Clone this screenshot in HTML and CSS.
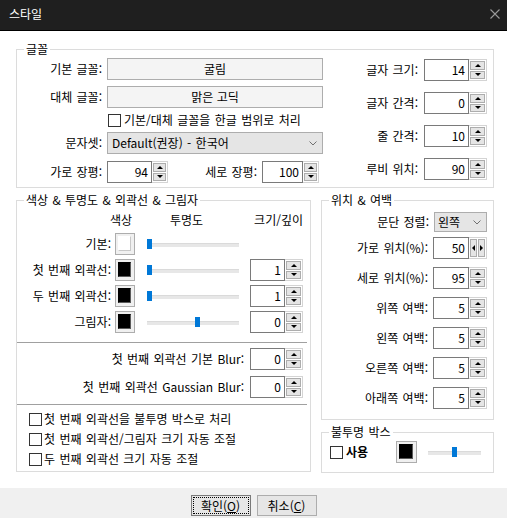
FILE: index.html
```html
<!DOCTYPE html>
<html lang="ko">
<head>
<meta charset="utf-8">
<title>스타일</title>
<link rel="stylesheet" href="styles.css">
</head>
<body>
<div class="titlebar">
  <span class="title">스타일</span>
  <svg class="close" width="10" height="10" viewBox="0 0 10 10"><path d="M0.5 0.5L9.5 9.5M9.5 0.5L0.5 9.5" stroke="#9a9a9a" stroke-width="1.1" fill="none"/></svg>
</div>
<main class="content">
  <fieldset class="group g-font">
    <legend>글꼴</legend>
    <div class="font-body">
      <div class="font-left">
        <div class="row"><span class="lbl l85">기본 글꼴:</span><button class="btn font-btn">굴림</button></div>
        <div class="row mt6"><span class="lbl l85">대체 글꼴:</span><button class="btn font-btn">맑은 고딕</button></div>
        <label class="check-row cr-font"><span class="cb"></span>기본/대체 글꼴을 한글 범위로 처리</label>
        <div class="row mt2"><span class="lbl l85">문자셋:</span><div class="combo font-combo"><span>Default(권장) - 한국어</span><svg class="chev" width="8" height="5" viewBox="0 0 8 5"><path d="M0.5 0.5L4 4L7.5 0.5" stroke="#707070" fill="none"/></svg></div></div>
        <div class="row mt7">
          <span class="lbl l85">가로 장평:</span>
          <div class="spin"><span class="val v45">94</span><span class="arrows a16"><i class="up"></i><i class="down"></i></span></div>
          <span class="lbl l89">세로 장평:</span>
          <div class="spin"><span class="val v41">100</span><span class="arrows a16"><i class="up"></i><i class="down"></i></span></div>
        </div>
      </div>
      <div class="font-right">
        <div class="row rrow first"><span class="lbl">글자 크기:</span><div class="spin"><span class="val v45">14</span><span class="arrows"><i class="up"></i><i class="down"></i></span></div></div>
        <div class="row rrow"><span class="lbl">글자 간격:</span><div class="spin"><span class="val v45">0</span><span class="arrows"><i class="up"></i><i class="down"></i></span></div></div>
        <div class="row rrow"><span class="lbl">줄 간격:</span><div class="spin"><span class="val v45">10</span><span class="arrows"><i class="up"></i><i class="down"></i></span></div></div>
        <div class="row rrow"><span class="lbl">루비 위치:</span><div class="spin"><span class="val v45">90</span><span class="arrows"><i class="up"></i><i class="down"></i></span></div></div>
      </div>
    </div>
  </fieldset>

  <div class="lower">
    <fieldset class="group g-color">
      <legend>색상 &amp; 투명도 &amp; 외곽선 &amp; 그림자</legend>
      <div class="color-head"><span class="h-color">색상</span><span class="h-alpha">투명도</span><span class="h-size">크기/깊이</span></div>
      <div class="crow first">
        <span class="lbl l94">기본:</span>
        <span class="swatch"><i class="fill white"></i></span>
        <div class="slider s92"><i class="thumb" style="left:0px"></i></div>
      </div>
      <div class="crow">
        <span class="lbl l94">첫 번째 외곽선:</span>
        <span class="swatch"><i class="fill black"></i></span>
        <div class="slider s92"><i class="thumb" style="left:0px"></i></div>
        <div class="spin csp"><span class="val v35">1</span><span class="arrows"><i class="up"></i><i class="down"></i></span></div>
      </div>
      <div class="crow">
        <span class="lbl l94">두 번째 외곽선:</span>
        <span class="swatch"><i class="fill black"></i></span>
        <div class="slider s92"><i class="thumb" style="left:0px"></i></div>
        <div class="spin csp"><span class="val v35">1</span><span class="arrows"><i class="up"></i><i class="down"></i></span></div>
      </div>
      <div class="crow">
        <span class="lbl l94">그림자:</span>
        <span class="swatch"><i class="fill black"></i></span>
        <div class="slider s92"><i class="thumb" style="left:48px"></i></div>
        <div class="spin csp"><span class="val v35">0</span><span class="arrows"><i class="up"></i><i class="down"></i></span></div>
      </div>
      <hr class="sep sep1">
      <div class="brow first"><span class="lbl">첫 번째 외곽선 기본 Blur:</span><div class="spin"><span class="val v35">0</span><span class="arrows"><i class="up"></i><i class="down"></i></span></div></div>
      <div class="brow"><span class="lbl">첫 번째 외곽선 Gaussian Blur:</span><div class="spin"><span class="val v35">0</span><span class="arrows"><i class="up"></i><i class="down"></i></span></div></div>
      <hr class="sep sep2">
      <div class="checks">
        <label class="check-row"><span class="cb"></span>첫 번째 외곽선을 불투명 박스로 처리</label>
        <label class="check-row"><span class="cb"></span>첫 번째 외곽선/그림자 크기 자동 조절</label>
        <label class="check-row"><span class="cb"></span>두 번째 외곽선 크기 자동 조절</label>
      </div>
    </fieldset>

    <div class="right-col">
      <fieldset class="group g-pos">
        <legend>위치 &amp; 여백</legend>
        <div class="prow combo-row"><span class="lbl">문단 정렬:</span><div class="combo pos-combo"><span>왼쪽</span><svg class="chev" width="8" height="5" viewBox="0 0 8 5"><path d="M0.5 0.5L4 4L7.5 0.5" stroke="#707070" fill="none"/></svg></div></div>
        <div class="prow first"><span class="lbl">가로 위치(%):</span><div class="spin"><span class="val v36">50</span><span class="arrows h"><i class="left"></i><i class="right"></i></span></div></div>
        <div class="prow"><span class="lbl">세로 위치(%):</span><div class="spin"><span class="val v36">95</span><span class="arrows"><i class="up"></i><i class="down"></i></span></div></div>
        <div class="prow"><span class="lbl">위쪽 여백:</span><div class="spin"><span class="val v36">5</span><span class="arrows"><i class="up"></i><i class="down"></i></span></div></div>
        <div class="prow"><span class="lbl">왼쪽 여백:</span><div class="spin"><span class="val v36">5</span><span class="arrows"><i class="up"></i><i class="down"></i></span></div></div>
        <div class="prow"><span class="lbl">오른쪽 여백:</span><div class="spin"><span class="val v36">5</span><span class="arrows"><i class="up"></i><i class="down"></i></span></div></div>
        <div class="prow"><span class="lbl">아래쪽 여백:</span><div class="spin"><span class="val v36">5</span><span class="arrows"><i class="up"></i><i class="down"></i></span></div></div>
      </fieldset>
      <fieldset class="group g-box">
        <legend>불투명 박스</legend>
        <div class="box-row">
          <label class="check-row use"><span class="cb"></span><b>사용</b></label>
          <span class="swatch sw21"><i class="fill black"></i></span>
          <div class="slider s53"><i class="thumb" style="left:24px"></i></div>
        </div>
      </fieldset>
    </div>
  </div>
</main>
<footer class="footer">
  <button class="dlg-btn default"><span>확인(<u>O</u>)</span></button>
  <button class="dlg-btn">취소(<u>C</u>)</button>
</footer>
</body>
</html>
```

FILE: styles.css
```css
* { box-sizing: border-box; }
html, body { margin: 0; padding: 0; }
body {
  width: 507px;
  height: 518px;
  overflow: hidden;
  background: #fff;
  color: #000;
  font-family: "Noto Sans CJK KR", "Noto Sans", sans-serif;
  font-size: 12px;
  line-height: 16px;
  word-spacing: 1px;
}
i { display: block; font-style: normal; }

/* title bar */
.titlebar {
  height: 31px;
  background: #1f1f1f;
  border-bottom: 1px solid #000;
  display: flex;
  align-items: center;
  justify-content: space-between;
  padding: 0 7px 2px 9px;
}
.title { color: #fff; }

/* content */
.content {
  height: 457px;
  padding: 10px 13px 0 16px;
}
.group {
  margin: 0;
  padding: 0;
  border: 1px solid #dcdcdc;
  min-width: 0;
}
.group legend {
  margin-left: 7px;
  padding: 0 2px;
  line-height: 16px;
}
.g-font { height: 147px; }

.font-body {
  display: flex;
  justify-content: space-between;
  padding: 1px 6px 0 0;
}
.row { display: flex; align-items: center; height: 22px; }
.mt2 { margin-top: 2px; }
.mt6 { margin-top: 6px; }
.mt7 { margin-top: 7px; }
.lbl { text-align: right; white-space: nowrap; }
.l85 { width: 85px; margin-right: 5px; }
.l89 { width: 89px; margin-right: 5px; }
.l94 { width: 94px; flex: none; }

.btn {
  font: inherit;
  color: #000;
  background: #f4f4f4;
  border: 1px solid #adadad;
  padding: 0;
  height: 22px;
}
.font-btn { width: 216px; }

.check-row {
  display: flex;
  align-items: center;
  height: 20px;
  white-space: nowrap;
}
.cr-font { margin-top: 2px; padding-left: 91px; }
.cb {
  width: 13px;
  height: 13px;
  border: 1px solid #333;
  background: #fff;
  margin-right: 3px;
  flex: none;
}

.combo {
  display: flex;
  align-items: center;
  justify-content: space-between;
  background: #e5e5e5;
  border: 1px solid #adadad;
  white-space: nowrap;
}
.font-combo { width: 216px; height: 22px; padding: 0 5px 0 4px; }
.pos-combo { width: 53px; height: 20px; padding: 0 5px 0 3px; }

/* spin boxes */
.spin { display: flex; height: 22px; flex: none; }
.val {
  border: 1px solid #7a7a7a;
  background: #fff;
  text-align: right;
  padding-right: 3px;
  line-height: 20px;
}
.v35 { width: 35px; }
.v36 { width: 36px; }
.v41 { width: 41px; }
.v45 { width: 45px; }
.arrows {
  width: 18px;
  display: flex;
  flex-direction: column;
  gap: 1px;
  padding: 1px;
  border: 1px solid #d4d4d4;
  border-left: 0;
}
.arrows.a16 { width: 16px; }
.arrows i {
  flex: 1;
  background: #e5e5e5;
  border: 1px solid #adadad;
  display: flex;
  align-items: center;
  justify-content: center;
}
.arrows .up::before {
  content: "";
  border-left: 3px solid transparent;
  border-right: 3px solid transparent;
  border-bottom: 3px solid #000;
}
.arrows .down::before {
  content: "";
  border-left: 3px solid transparent;
  border-right: 3px solid transparent;
  border-top: 3px solid #000;
}
.arrows.h { flex-direction: row; }
.arrows .left::before {
  content: "";
  border-top: 3px solid transparent;
  border-bottom: 3px solid transparent;
  border-right: 3px solid #000;
}
.arrows .right::before {
  content: "";
  border-top: 3px solid transparent;
  border-bottom: 3px solid transparent;
  border-left: 3px solid #000;
}

/* right part of font group */
.rrow { justify-content: flex-end; margin-top: 11px; }
.rrow.first { margin-top: 1px; }
.rrow .lbl { margin-right: 6px; }

/* lower area */
.lower {
  display: flex;
  gap: 10px;
  margin-top: 4px;
}
.g-color { width: 295px; height: 280px; }
.right-col {
  width: 173px;
  display: flex;
  flex-direction: column;
  gap: 4px;
}
.g-pos { height: 228px; }
.g-box { height: 49px; }

.color-head {
  display: flex;
  height: 16px;
  margin-top: 4px;
  padding: 0 7px 0 93px;
  white-space: nowrap;
}
.h-color { width: 24px; }
.h-alpha { margin-left: 36px; }
.h-size { margin-left: auto; }

.crow {
  display: flex;
  align-items: center;
  height: 22px;
  margin-top: 4px;
  white-space: nowrap;
}
.crow.first { margin-top: 5px; }

.swatch {
  width: 20px;
  height: 22px;
  flex: none;
  margin-left: 4px;
  border: 1px solid #adadad;
  background: #f0f0f0;
  padding: 2px 3px 3px 2px;
}
.sw21 { width: 21px; margin-left: 0; }
.fill { width: 100%; height: 100%; border: 1px solid; }
.fill.white { background: #fff; border-color: #fff #c8c8c8 #c8c8c8 #fff; }
.fill.black { background: #000; border-color: #000 #5a5a5a #5a5a5a #000; }

.slider {
  position: relative;
  height: 22px;
  flex: none;
}
.slider::before {
  content: "";
  position: absolute;
  left: 0;
  right: 0;
  top: 10px;
  height: 3px;
  background: #e7e7e7;
  border-top: 1px solid #dadada;
}
.thumb {
  position: absolute;
  top: 6px;
  width: 5px;
  height: 10px;
  background: #0078d7;
}
.s92 { width: 92px; margin-left: 12px; }
.s53 { width: 53px; margin-left: 11px; }
.csp { margin-left: 11px; }

.sep {
  border: 0;
  height: 1px;
  background: #a0a0a0;
  margin: 0 3px 0 0;
}
.sep1 { margin-top: 9px; }
.sep2 { margin-top: 6px; }

.brow {
  display: flex;
  justify-content: flex-end;
  align-items: center;
  height: 22px;
  margin-top: 6px;
  padding-right: 7px;
  white-space: nowrap;
}
.brow.first { margin-top: 5px; }
.brow .lbl { margin-right: 6px; }

.checks { margin-top: 4px; padding-left: 12px; }
.checks .cb { margin-right: 2px; }

.prow {
  display: flex;
  justify-content: flex-end;
  align-items: center;
  height: 22px;
  margin-top: 8px;
  padding-right: 6px;
  white-space: nowrap;
}
.prow .lbl { margin-right: 5px; }
.prow.combo-row { height: 20px; margin-top: 4px; }
.prow.first { margin-top: 5px; }

.box-row {
  display: flex;
  align-items: center;
  height: 22px;
  margin-top: 1px;
  padding-left: 8px;
}
.use { width: 66px; }
.use b { font-weight: 700; }

/* footer */
.footer {
  height: 30px;
  background: #f0f0f0;
  display: flex;
  justify-content: center;
  gap: 6px;
  padding-top: 7px;
}
.dlg-btn {
  font: inherit;
  color: #000;
  width: 60px;
  height: 21px;
  padding: 0;
  background: #e6e6e6;
  border: 1px solid #adadad;
}
.dlg-btn.default {
  border-color: #7a7a7a;
  padding: 1px;
}
.dlg-btn.default span {
  display: block;
  height: 100%;
  border: 1px dotted #000;
  line-height: 15px;
}
```
